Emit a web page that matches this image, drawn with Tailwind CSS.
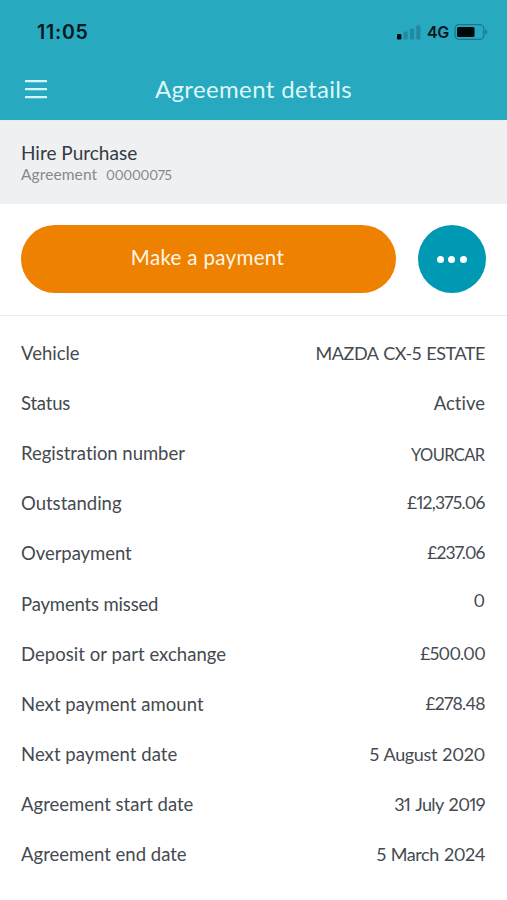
<!DOCTYPE html>
<html lang="en">
<head>
<meta charset="utf-8">
<title>Agreement details</title>
<script src="https://cdn.jsdelivr.net/npm/@tailwindcss/browser@4"></script>
</head>
<body class="w-[507px] h-[900px] overflow-hidden bg-white font-['Lato',sans-serif] text-[#444a50] [font-variant-ligatures:none] [font-variant-numeric:proportional-nums]">
<header class="h-[120px] bg-[#27a9bf] flex flex-col">
  <div class="h-16 pl-[37px] pr-[19px] flex items-center justify-between font-['Inter',sans-serif] text-[#06181d]">
    <span class="text-[19.5px] leading-6 font-semibold tracking-[0.75px]">11:05</span>
    <div class="flex items-center">
      <svg class="w-6 h-4" viewBox="0 0 24 16">
        <rect x="0" y="10" width="4.4" height="5.5" rx="1" fill="#00080b"/>
        <g fill="#2389a0"><rect x="6.5" y="7.5" width="4.2" height="8" rx="1"/><rect x="12.9" y="4.5" width="4.2" height="11" rx="1"/><rect x="19.3" y="1.5" width="4.2" height="14" rx="1"/></g>
      </svg>
      <span class="ml-[6px] w-[22px] text-[16px] leading-5 font-semibold tracking-[-0.5px]">4G</span>
      <svg class="ml-[5px] w-[34px] h-4" viewBox="0 0 34 16">
        <rect x="1" y=".7" width="28.8" height="14.6" rx="4" fill="none" stroke="#18798c" stroke-width="1.3"/>
        <rect x="3" y="3" width="17.5" height="10" rx="1.5" fill="#00080b"/>
        <path d="M31.3 5.5c2.6.8 2.6 4.2 0 5z" fill="#18798c"/>
      </svg>
    </div>
  </div>
  <div class="flex-1 grid grid-cols-[1fr_auto_1fr] items-start pl-[25px] text-[#ddf7fa]">
    <svg class="mt-[15px] w-[22px] h-5" viewBox="0 0 22 20"><path d="M0 2.2h22M0 10.2h22M0 18.2h22" stroke="#d8f6fa" stroke-width="2.2"/></svg>
    <h1 class="mt-[9px] mr-[25px] text-[24px] leading-8 tracking-[0.36px]">Agreement details</h1>
  </div>
</header>
<section class="h-[84px] bg-[#eff0f2] border-t border-[#e3eff3] pl-[21px] pt-[20px]">
  <h2 class="text-[19px] leading-6 text-[#343b41]">Hire Purchase</h2>
  <p class="flex items-baseline text-[#85898e] leading-[18px]"><span class="w-[85px] text-[15.5px] tracking-[0.1px]">Agreement</span><span class="text-[13.5px] tracking-[-0.25px]">00000075</span></p>
</section>
<section class="h-28 border-b border-[#ececee] pt-[21px] pl-[21px] pr-[21.5px] flex justify-between">
  <button class="w-[375px] h-[68px] rounded-full bg-[#ee8200] text-[#fff6e8] text-[20.5px] leading-6 tracking-[0.34px] pb-[5px] pr-[2px]">Make a payment</button>
  <button class="w-[68px] h-[68px] rounded-full bg-[#0099b3] flex items-center justify-center gap-[4.5px]">
    <span class="size-[7px] rounded-full bg-white"></span><span class="size-[7px] rounded-full bg-white"></span><span class="size-[7px] rounded-full bg-white"></span>
  </button>
</section>
<dl class="pt-[12px] pl-[21px] pr-[22px] text-[18.5px] leading-6 [&>div]:h-[50.1px] [&>div]:flex [&>div]:items-center [&>div]:justify-between">
  <div><dt>Vehicle</dt><dd class="text-[18px] tracking-[-0.45px] [word-spacing:1px]">MAZDA CX-5 ESTATE</dd></div>
  <div><dt class="tracking-[-0.2px]">Status</dt><dd>Active</dd></div>
  <div><dt class="tracking-[-0.03px]">Registration number</dt><dd class="text-[16.5px] tracking-[-0.6px] mr-[0.4px] pt-[3px]">YOURCAR</dd></div>
  <div><dt>Outstanding</dt><dd class="text-[17.5px] tracking-[-0.75px] mr-[0.3px]">£12,375.06</dd></div>
  <div><dt class="tracking-[-0.05px]">Overpayment</dt><dd class="text-[17.5px] tracking-[-0.9px] mr-[0.5px]">£237.06</dd></div>
  <div><dt class="tracking-[-0.16px]">Payments missed</dt><dd class="text-[17.5px] pb-[5px]">0</dd></div>
  <div><dt class="tracking-[0.05px]">Deposit or part exchange</dt><dd class="text-[17.5px] tracking-[-0.7px]">£500.00</dd></div>
  <div><dt class="tracking-[0.06px]">Next payment amount</dt><dd class="text-[17.5px] tracking-[-0.75px] mr-[0.3px]">£278.48</dd></div>
  <div><dt class="tracking-[0.06px]">Next payment date</dt><dd class="text-[18px] tracking-[-0.35px] [word-spacing:1px]">5 August 2020</dd></div>
  <div><dt>Agreement start date</dt><dd class="text-[18px] tracking-[-0.65px] [word-spacing:1.5px]">31 July 2019</dd></div>
  <div><dt>Agreement end date</dt><dd class="text-[18px] tracking-[-0.45px] [word-spacing:1px]">5 March 2024</dd></div>
</dl>
</body>
</html>
